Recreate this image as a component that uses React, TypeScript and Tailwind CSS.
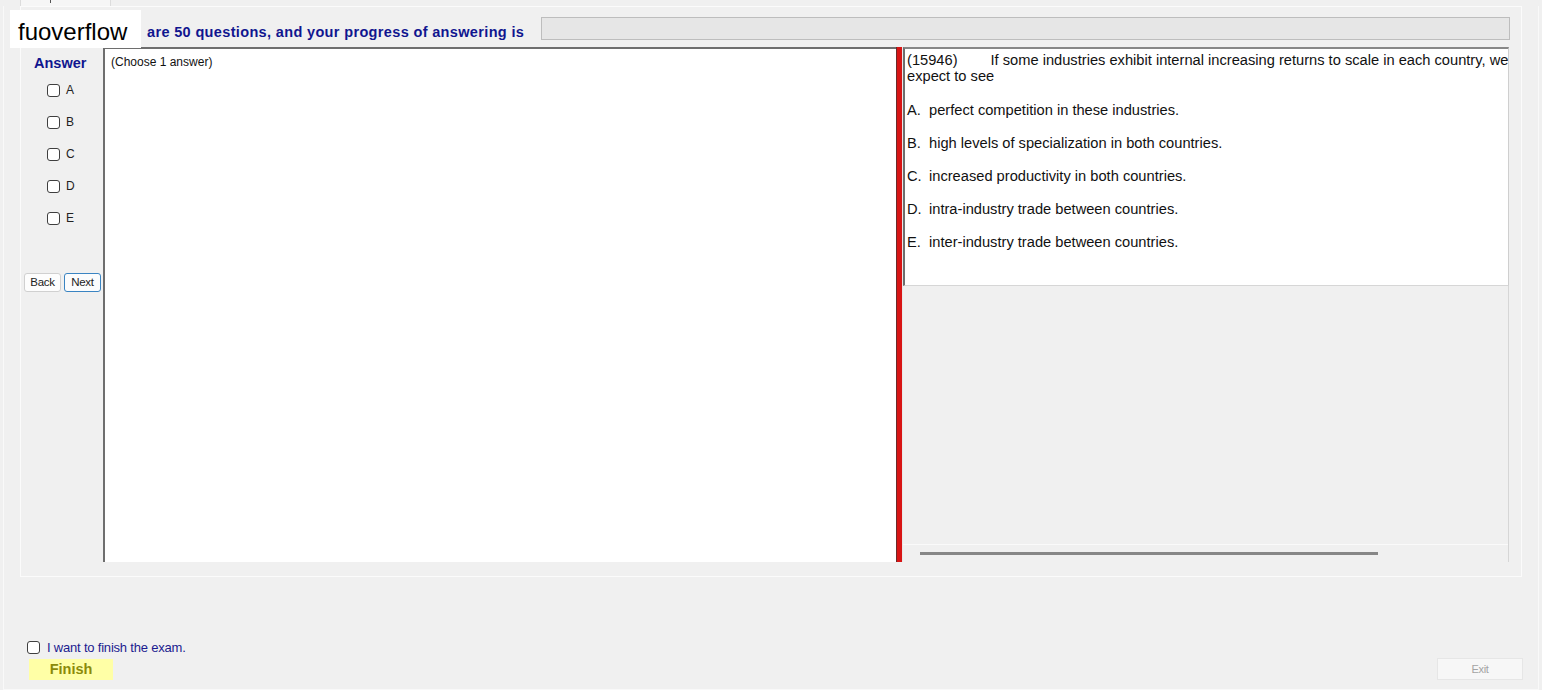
const choices = ["A", "B", "C", "D", "E"];

const options = [
  { key: "A", text: "perfect competition in these industries." },
  { key: "B", text: "high levels of specialization in both countries." },
  { key: "C", text: "increased productivity in both countries." },
  { key: "D", text: "intra-industry trade between countries." },
  { key: "E", text: "inter-industry trade between countries." },
];

function Box() {
  return (
    <span className="block w-[13px] h-[13px] shrink-0 rounded-[3px] border border-[#3f3f3f] bg-white" />
  );
}

export default function App() {
  return (
    <div className="relative w-[1542px] h-[690px] overflow-hidden bg-[#f0f0f0] font-['Liberation_Sans',Arial,sans-serif] text-black">
      {/* tab strip */}
      <div className="h-[6px] flex">
        <div className="ml-[20px] w-[91px] h-full border-x border-[#dcdcdc] bg-[#f6f6f6] flex">
          <span className="ml-[29px] w-px h-[3px] bg-[#555]" />
        </div>
      </div>

      {/* outer frame */}
      <div className="ml-[3px] w-[1536px] h-[684px] border-x border-b border-[#f9f9f9] flex flex-col">
        {/* group panel */}
        <div className="ml-[16px] w-[1502px] h-[571px] border border-[#fbfbfb] flex flex-col">
          {/* header */}
          <div className="h-[40px] flex items-start">
            <div className="ml-[126px] mt-[17px] w-[394px] shrink-0 whitespace-nowrap text-[14.5px] leading-[16px] font-bold tracking-[0.35px] text-[#10168f]">
              are 50 questions, and your progress of answering is
            </div>
            <div className="mt-[10px] w-[969px] h-[23px] border border-[#bdbdbd] bg-[#e6e6e6]" />
          </div>

          {/* main row */}
          <div className="ml-[3px] h-[515px] flex">
            {/* answer column */}
            <div className="w-[79px] shrink-0 flex flex-col">
              <div className="mt-[8px] pl-[10px] text-[14.5px] leading-[16px] font-bold text-[#10168f]">
                Answer
              </div>
              <div className="mt-[3px] flex flex-col">
                {choices.map((c) => (
                  <div key={c} className="h-[32px] flex items-center pl-[23px] gap-[6px]">
                    <Box />
                    <span className="text-[12px] leading-none text-[#222]">{c}</span>
                  </div>
                ))}
              </div>
              <div className="mt-[39px] flex gap-[3px]">
                <button className="w-[37px] h-[19px] rounded-[3px] border border-[#d0d0d0] bg-[#fdfdfd] text-[11.5px] tracking-[-0.3px] text-[#222] leading-none">
                  Back
                </button>
                <button className="w-[37px] h-[19px] rounded-[3px] border border-[#3a84c2] bg-[#fbfcfd] text-[11.5px] tracking-[-0.3px] text-[#222] leading-none">
                  Next
                </button>
              </div>
            </div>

            {/* answer pane */}
            <div className="w-[793px] shrink-0 bg-white border-t-2 border-l-2 border-[#6e6e6e] pl-[6px] pt-[6px]">
              <div className="text-[12px] leading-[14px] text-[#111]">(Choose 1 answer)</div>
            </div>

            {/* splitter */}
            <div className="w-[7px] shrink-0 bg-[#d81414] border-l border-r border-l-[#6a2a2a] border-r-[#e8e8e8]" />

            {/* question pane */}
            <div className="w-[606px] shrink-0 flex flex-col">
              <div className="h-[239px] bg-white border-t-2 border-l-2 border-t-[#878787] border-l-[#6e6e6e] border-r border-r-[#cfcfcf] border-b border-b-[#d6d6d6] pl-[2px] pt-[3px] overflow-hidden">
                <div className="text-[14.67px] leading-[16px] whitespace-nowrap text-[#111]">
                  <span>(15946)</span>
                  <span className="inline-block w-[33px]" />
                  <span>If some industries exhibit internal increasing returns to scale in each country, we</span>
                </div>
                <div className="text-[14.67px] leading-[16px] text-[#111]">expect to see</div>
                <div className="mt-[9px] flex flex-col">
                  {options.map((o) => (
                    <div key={o.key} className="h-[33px] flex items-center text-[14.67px] text-[#111]">
                      <span className="w-[22px] shrink-0">{o.key}.</span>
                      <span>{o.text}</span>
                    </div>
                  ))}
                </div>
              </div>
              <div className="flex-1 bg-[#f0f0f0] border-r border-[#d6d6d6] flex flex-col justify-end">
                <div className="h-[18px] border-t border-[#fafafa] flex items-center pl-[17px]">
                  <span className="w-[458px] h-[3px] bg-[#878787]" />
                </div>
              </div>
            </div>
          </div>
        </div>

        {/* bottom bar */}
        <div className="mt-[62px] flex items-end justify-between">
          <div className="flex flex-col">
            <label className="ml-[23px] h-[16px] flex items-center gap-[7px]">
              <Box />
              <span className="text-[13px] tracking-[-0.2px] leading-none text-[#1b1b8f]">
                I want to finish the exam.
              </span>
            </label>
            <button className="ml-[25px] mt-[4px] w-[84px] h-[21px] bg-[#ffffa6] text-[14.5px] font-bold leading-none text-[#8b8b0a]">
              Finish
            </button>
          </div>
          <button className="mr-[15px] w-[86px] h-[22px] border border-[#e6e6e6] bg-[#f7f7f7] text-[11px] tracking-[-0.3px] leading-none text-[#a4a4a4]">
            Exit
          </button>
        </div>
      </div>

      {/* watermark */}
      <div className="absolute left-[10px] top-[10px] w-[131px] h-[38px] bg-white flex items-center pl-[8px] pt-[5px] text-[24px] leading-none text-black">
        fuoverflow
      </div>
    </div>
  );
}
